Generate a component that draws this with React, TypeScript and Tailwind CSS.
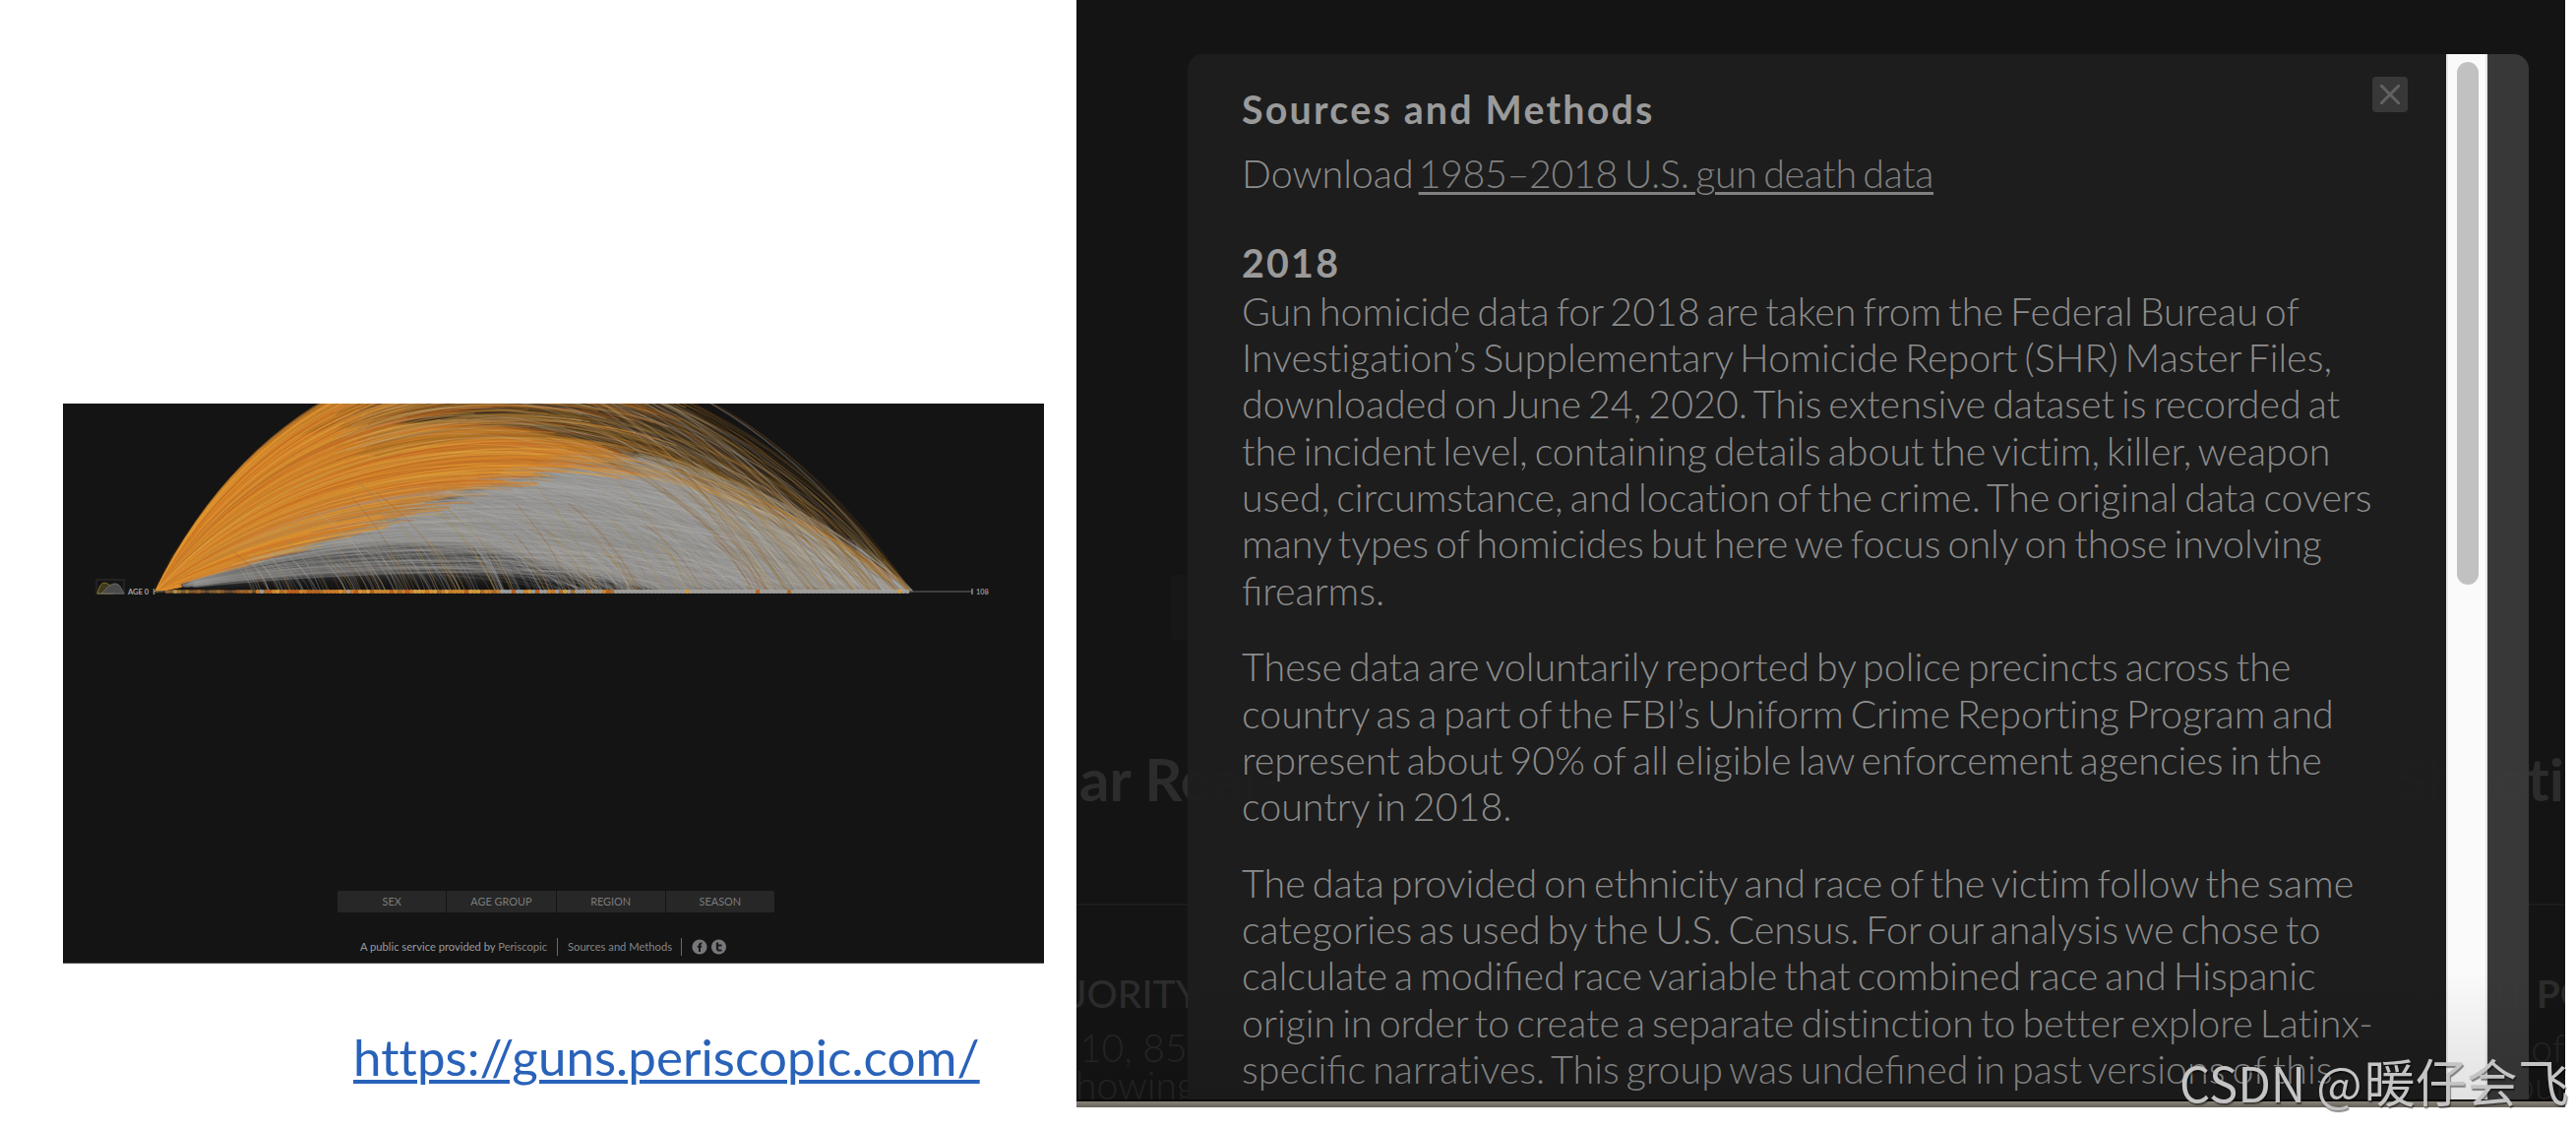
import { FC, ReactNode } from 'react';

type Pt = [number, number];

// chart is drawn in its own 997x569 space, the origin is the "age 0" tick
const OX = 94;
const OY = 191;

const seeded = (seed: number) => () => {
  seed = (seed * 1664525 + 1013904223) % 4294967296;
  return seed / 4294967296;
};

// upper edge of the grey band, past this the years are stolen
const boundary: Pt[] = [[94, 189], [199, 157], [313, 121], [413, 88], [516, 62], [616, 64], [700, 96], [790, 145], [866, 191]];

const boundaryY = (x: number) => {
  for (let i = 1; i < boundary.length; i++) {
    const [x0, y0] = boundary[i - 1];
    const [x1, y1] = boundary[i];
    if (x <= x1) return y0 + ((x - x0) / (x1 - x0)) * (y1 - y0);
  }
  return 191;
};

const lifeArc = (k: number, end: number) => {
  const w = end - OX;
  const p: Pt[] = [[OX, OY], [OX + w * (0.2 + (1 - k) * 0.08), OY - 308 * k], [OX + w * 0.7, OY - 340 * k], [end, OY]];
  const pts: Pt[] = [];
  for (let i = 0; i <= 48; i++) {
    const t = i / 48;
    const u = 1 - t;
    const b = [u * u * u, 3 * u * u * t, 3 * u * t * t, t * t * t];
    pts.push([
      b[0] * p[0][0] + b[1] * p[1][0] + b[2] * p[2][0] + b[3] * p[3][0],
      b[0] * p[0][1] + b[1] * p[1][1] + b[2] * p[2][1] + b[3] * p[3][1],
    ]);
  }
  return pts;
};

const toPath = (pts: Pt[]) => 'M' + pts.map(([x, y]) => `${x.toFixed(1)} ${y.toFixed(1)}`).join('L');

type Stroke = { d: string; color: string; opacity: number; width: number };

const buildStrokes = () => {
  const rnd = seeded(42);
  const grey: Stroke[] = [];
  const orange: Stroke[] = [];
  const drops: Stroke[] = [];
  const greys = ['#a8a8a8', '#9c9c9c', '#b5b3b0', '#8c8a88'];
  const oranges = ['#e8a033', '#d9822b', '#c8641f', '#e0a845', '#b5742a', '#d98f2e'];

  for (let i = 0; i < 520; i++) {
    const k = 0.08 + rnd() * 0.74;
    const end = 864 - Math.pow(rnd(), 1.5) * (k > 0.5 ? 170 : 360);
    const jitter = 4 + rnd() * 12;
    const pts = lifeArc(k, end);
    const from = pts.findIndex(([x, y], n) => n > 2 && y > boundaryY(x) - jitter);
    if (from < 0) continue;
    grey.push({ d: toPath(pts.slice(from)), color: greys[Math.floor(rnd() * 4)], opacity: k < 0.2 ? 0.16 : 0.25, width: 1.4 });
  }

  for (let i = 0; i < 620; i++) {
    const k = 0.12 + rnd() * 0.88;
    const end = 864 - Math.pow(rnd(), 1.8) * (k > 0.8 ? 50 : 120);
    const jitter = (rnd() - 0.5) * 34;
    const pts = lifeArc(k, end);
    let cut = pts.findIndex(([x, y], n) => n > 2 && y > boundaryY(x) + jitter * Math.min(1, (x - OX) / 300));
    if (cut < 0) cut = pts.length;
    // the higher arcs thin out before they come back down
    const stop = Math.min(cut, Math.floor(k > 0.6 ? 14 + rnd() * 22 : 48));
    if (stop < 3) continue;
    orange.push({ d: toPath(pts.slice(0, stop)), color: oranges[Math.floor(rnd() * 6)], opacity: 0.38, width: 1.3 });
  }

  for (let i = 0; i < 130; i++) {
    const k = 0.64 + rnd() * 0.38;
    const pts = lifeArc(k, 862 - Math.pow(rnd(), 1.3) * 150).slice(16);
    orange.push({ d: toPath(pts), color: ['#a87a2a', '#8a5520', '#b9b0a4'][i % 3], opacity: 0.22, width: 1.3 });
  }

  for (let i = 0; i < 240; i++) {
    const x = 190 + rnd() * 520;
    const h = 25 + rnd() * (x > 320 ? 90 : 30);
    const w = h * (0.6 + rnd() * 0.3);
    drops.push({
      d: `M${(x - w).toFixed(1)} ${(191 - h).toFixed(1)}Q${(x - w * 0.3).toFixed(1)} ${(191 - h * 0.55).toFixed(1)} ${x.toFixed(1)} 191`,
      color: ['#a8812f', '#8f5e34', '#a8a8a8', '#8a8a8a', '#989898'][Math.floor(rnd() * 5)],
      opacity: 0.28,
      width: 1.1,
    });
  }

  const dots = [];
  for (let x = 104; x < 858; x += 4) {
    const t = (x - 104) / 754;
    const isOrange = rnd() > (t < 0.45 ? 0.05 : t < 0.6 ? 0.4 : 0.93);
    dots.push({
      x,
      color: isOrange ? oranges[Math.floor(rnd() * 6)] : '#a9a7a4',
      opacity: t < 0.12 ? 0.25 + rnd() * 0.5 : 0.88,
    });
  }
  return { grey, orange, drops, dots };
};

const strokes = buildStrokes();

const Strokes: FC<{ items: Stroke[] }> = ({ items }) => (
  <g fill="none">
    {items.map((s, i) => (
      <path key={i} d={s.d} stroke={s.color} strokeOpacity={s.opacity} strokeWidth={s.width} />
    ))}
  </g>
);

const ArcChart = () => (
  <svg className="block h-[210px] w-[997px]" viewBox="0 0 997 210">
    <defs>
      <filter id="soft" x="-10%" y="-10%" width="120%" height="120%">
        <feGaussianBlur stdDeviation="5" />
      </filter>
      <filter id="edge" x="-10%" y="-10%" width="120%" height="120%">
        <feGaussianBlur stdDeviation="1.5" />
      </filter>
      <clipPath id="above">
        <path d="M0 0H997V193H0Z" />
      </clipPath>
    </defs>
    <g clipPath="url(#above)">
      <path filter="url(#soft)" fill="#5e4526" fillOpacity="0.6" d="M270 0L310 -20H560L640 10L740 90L840 178L700 110L600 66L400 20L250 30Z" />
      <path filter="url(#soft)" fill="#434343" fillOpacity="0.8" d="M125 186L229 160L330 148L430 158L560 185V172L800 186L560 191L480 178L260 176Z" />
      <path filter="url(#soft)" fill="#908e8c" d="M190 163L313 121L413 88L516 62L600 64L680 98L770 146L856 192L620 192L520 172L430 150L330 144L229 154Z" />
      <path filter="url(#edge)" fill="#bf7629" d="M94 191L112 156L136 122L163 86L200 48L235 32L330 20L440 22L530 38L590 58L516 64L413 88L313 121L229 150L150 175Z" />
      <Strokes items={strokes.drops} />
      <Strokes items={strokes.grey} />
      <Strokes items={strokes.orange} />
      <Strokes items={strokes.drops.slice(0, 50)} />
    </g>
    <path d="M94 191H924" stroke="#4c4c4c" strokeWidth="1.5" />
    {strokes.dots.map((dot) => (
      <rect key={dot.x} x={dot.x} y="189" width="4.2" height="4" rx="1" fill={dot.color} fillOpacity={dot.opacity} />
    ))}
    <path d="M92.500 188V194M924 188V194" stroke="#8a8a8a" strokeWidth="1.500" />
    <rect x="34" y="179" width="28" height="14.500" fill="none" stroke="#333333" />
    <path d="M35 193C38 181 42 180 48 185L51 193Z" fill="#3f3a1c" stroke="#8a7a2a" strokeWidth="1" />
    <path d="M39 193C46 186 48 183 53 183C58 183 59 188 62 193Z" fill="#4a4a4a" stroke="#777777" strokeWidth="0.8" />
    <text x="66" y="194" className="fill-[#a5a5a5] font-['Lato'] text-[7.6px] font-bold">AGE 0</text>
    <text x="928" y="194" className="fill-[#909090] font-['Lato'] text-[7.4px] font-bold">108</text>
  </svg>
);

const filters = ['SEX', 'AGE GROUP', 'REGION', 'SEASON'];

const ChartPanel = () => (
  <div className="ml-[64px] flex h-[569px] w-[997px] flex-col overflow-hidden border-b border-[#555555] bg-[#141414]">
    <ArcChart />
    <div className="mt-[285px] ml-[279px] flex h-[22px] w-[444px] gap-px overflow-hidden rounded-[2px]">
      {filters.map((name) => (
        <div key={name} className="flex flex-1 items-center justify-center bg-[#272727] text-[10.900px] text-[#7c7c7c]">
          {name}
        </div>
      ))}
    </div>
    <div className="mt-[26px] ml-[302px] flex h-[18px] items-center text-[11.200px] whitespace-nowrap text-[#858585]">
      <span className="w-[200px]">
        <span className="text-[#9a9a9a]">A public service provided by</span> Periscopic
      </span>
      <span className="h-[18px] w-px bg-[#6a6a6a]" />
      <span className="w-[125px] pl-[10px]">Sources and Methods</span>
      <span className="h-[18px] w-px bg-[#6a6a6a]" />
      <svg className="ml-[10px] h-4 w-[36px]" viewBox="0 0 36 16">
        <circle cx="8" cy="8" r="7.600" fill="#77777b" />
        <circle cx="27.500" cy="8" r="7.600" fill="#77777b" />
        <path d="M8 13V6.200Q8 4.300 10.400 4.500M5.800 7.800H10.200" fill="none" stroke="#1b1b1b" strokeWidth="2" />
        <path d="M26 3.500V9.500Q26 11.500 28 11.500H30.500M26 6.500H30.500" fill="none" stroke="#1b1b1b" strokeWidth="2.200" />
      </svg>
    </div>
  </div>
);

// ligatures are off for the body text, only "fi" keeps its own
const Line: FC<{ children: string }> = ({ children }) => (
  <span className="block whitespace-nowrap">
    {children.split(/(fi)/).map((part, i): ReactNode =>
      part === 'fi' ? (
        <span key={i} className="[font-variant-ligatures:normal]">
          {part}
        </span>
      ) : (
        part
      )
    )}
  </span>
);

const paragraphs = [
  [
    'Gun homicide data for 2018 are taken from the Federal Bureau of',
    'Investigation’s Supplementary Homicide Report (SHR) Master Files,',
    'downloaded on June 24, 2020. This extensive dataset is recorded at',
    'the incident level, containing details about the victim, killer, weapon',
    'used, circumstance, and location of the crime. The original data covers',
    'many types of homicides but here we focus only on those involving',
    'firearms.',
  ],
  [
    'These data are voluntarily reported by police precincts across the',
    'country as a part of the FBI’s Uniform Crime Reporting Program and',
    'represent about 90% of all eligible law enforcement agencies in the',
    'country in 2018.',
  ],
  [
    'The data provided on ethnicity and race of the victim follow the same',
    'categories as used by the U.S. Census. For our analysis we chose to',
    'calculate a modified race variable that combined race and Hispanic',
    'origin in order to create a separate distinction to better explore Latinx-',
    'specific narratives. This group was undefined in past versions of this',
  ],
];

const SourcesModal = () => (
  <div className="flex h-[1062px] w-[1363px] overflow-hidden rounded-t-[15px]">
    <div className="flex w-[1279px] bg-[#1e1e1e]/95">
      <div className="w-[1149px] pl-[55px] text-[39.400px] leading-[47.300px] font-light text-[#8c8c8c] [font-variant-ligatures:none] [word-spacing:-3.700px]">
        <h1 className="mt-[32px] text-[39.400px] font-bold tracking-[2.200px] text-[#9a9a9a] [word-spacing:0px]">Sources and Methods</h1>
        <p className="mt-[18px] whitespace-nowrap">
          Download{' '}
          <span className="-ml-[2px] tracking-[-0.35px] text-[#808080] underline decoration-[2.500px] underline-offset-[4px]">
            1985–2018 U.S. gun death data
          </span>
        </p>
        <h2 className="mt-[43px] mb-[2px] text-[39.400px] font-bold tracking-[2.200px] text-[#9a9a9a]">2018</h2>
        {paragraphs.map((lines, i) => (
          <p key={i} className="mb-[30.300px]">
            {lines.map((line) => (
              <Line key={line}>{line}</Line>
            ))}
          </p>
        ))}
      </div>
      <div className="mt-[23px] ml-[55px] flex h-9 w-9 items-center justify-center rounded-[4px] bg-[#383838]">
        <svg className="h-5 w-5" viewBox="0 0 20 20">
          <path d="M1 1L19 19M19 1L1 19" stroke="#626262" strokeWidth="3" strokeLinecap="round" />
        </svg>
      </div>
    </div>
    <div className="flex w-[42px] justify-center border-x-2 border-[#e6e6e6] bg-[#fafafa] pt-[8px] pl-[2px]">
      <div className="h-[531px] w-[22px] rounded-full bg-[#c1c1c1]" />
    </div>
    <div className="w-[42px] bg-[#3a3a3a]/95" />
  </div>
);

const PagePanel = () => (
  <div className="relative flex h-[1125px] w-[1513px] flex-col overflow-hidden bg-[#141414]">
    {/* dimmed page behind the dialog */}
    <div className="absolute inset-0 text-[#2c2c2c]">
      <div className="absolute top-[584px] left-[96px] h-[66px] w-[60px] rounded-[4px] bg-[#171717]" />
      <div className="absolute top-[755px] left-[3px] text-[60px] font-bold">ar Real-</div>
      <div className="absolute top-[755px] right-[1px] text-[60px] font-bold [font-variant-ligatures:none]">Shooti</div>
      <div className="absolute top-[918px] h-[2px] w-full bg-[#1c1c1c]" />
      <div className="absolute top-[986px] -left-[6px] text-[39px] font-medium">JORITY</div>
      <div className="absolute top-[986px] left-[1422px] text-[39px] whitespace-nowrap">NT <b>POP</b></div>
      <div className="absolute top-[1041px] left-[3px] text-[39px] font-light text-[#262626]">10, 85%</div>
      <div className="absolute top-[1041px] right-0 text-[39px] font-light text-[#262626]">ty of</div>
      <div className="absolute top-[1079px] -left-[1px] text-[39px] font-light text-[#262626]">howing</div>
      <div className="absolute top-[1079px] right-[-12px] text-[39px] font-light text-[#262626]">oun</div>
    </div>
    <div className="relative mt-[55px] ml-[113px]">
      <SourcesModal />
    </div>
    <div className="relative h-[2px] bg-[#080704]" />
    <div className="relative h-[6px] bg-linear-to-b from-[#8a857b] to-[#666158]" />
    <div className="absolute bottom-[8px] h-[130px] w-full bg-linear-to-b from-transparent to-black/10" />
  </div>
);

export default function App() {
  return (
    <div className="relative flex h-[1146px] w-[2618px] overflow-hidden bg-white font-['Lato',sans-serif] leading-[1.2]">
      <div className="w-[1094px] pt-[410px]">
        <ChartPanel />
        <a className="mt-[64px] ml-[359px] block w-fit text-[51px] leading-[61px] tracking-[0.080px] whitespace-nowrap text-[#2962b9] underline decoration-[4px] underline-offset-[4px]">
          https://guns.periscopic.com/
        </a>
      </div>
      <PagePanel />
      <div className="absolute top-[1066px] left-[2215px] flex items-baseline font-['Noto_Sans_CJK_SC',sans-serif] text-[49px] leading-[64px] whitespace-nowrap text-[#c4c4c4] [text-shadow:1px_2px_1px_rgba(0,0,0,0.45)]">
        <span>CSDN @</span>
        <span className="ml-[2px] text-[52px]">暖仔会飞</span>
      </div>
    </div>
  );
}
